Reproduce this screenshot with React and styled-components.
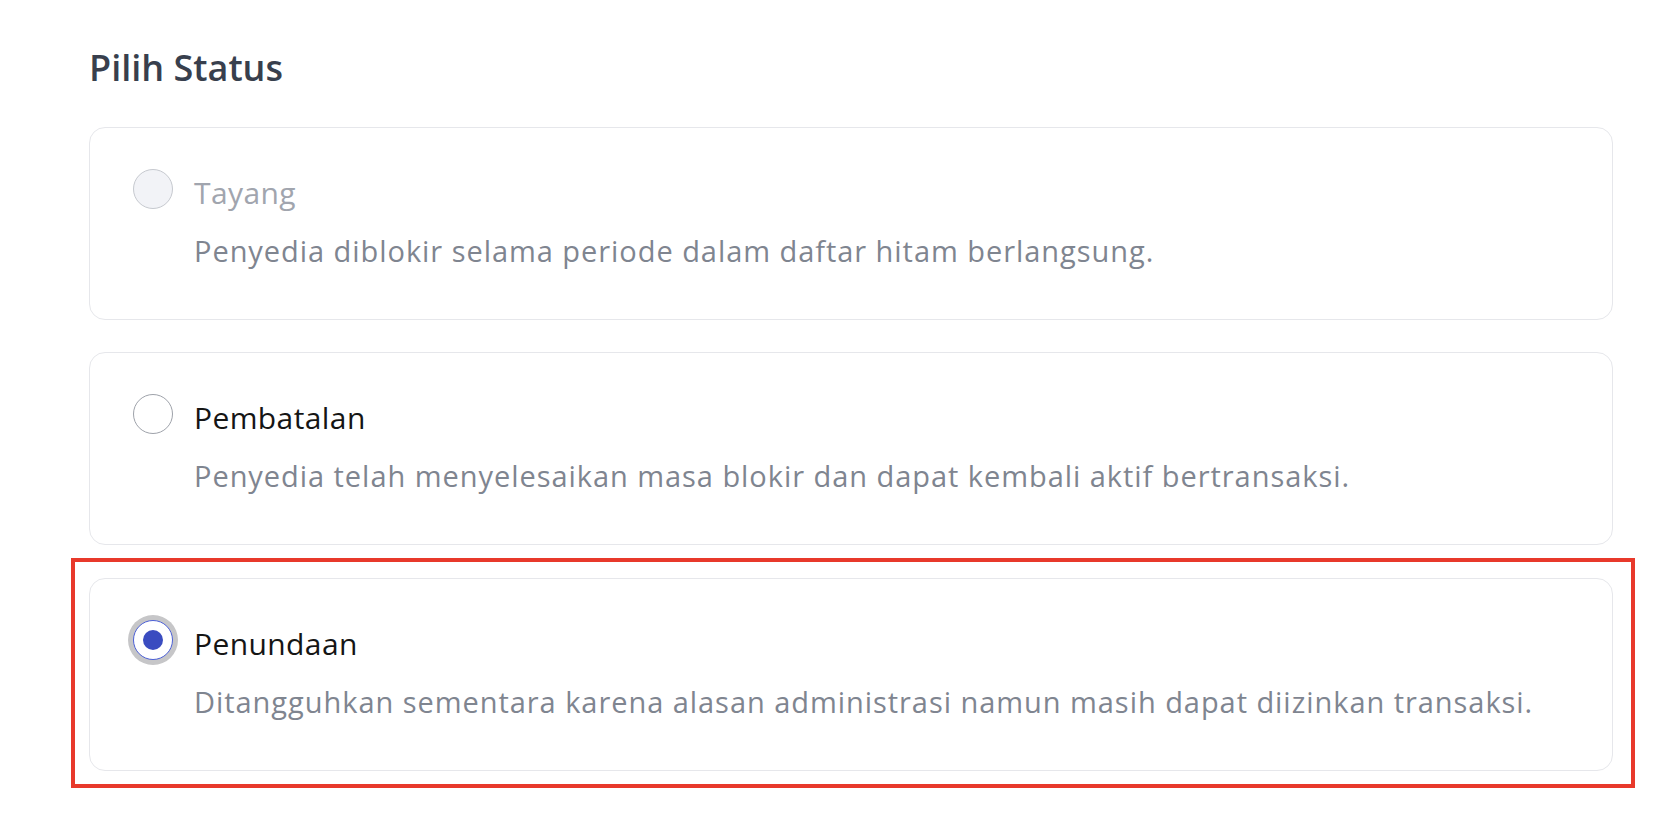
import React, { useState } from "react";
import styled, { createGlobalStyle, css } from "styled-components";

const GlobalStyle = createGlobalStyle`
  body {
    margin: 0;
    background: #ffffff;
    font-family: "Open Sans", "Noto Sans", sans-serif;
  }
`;

const Page = styled.div`
  padding: 44px 57px 40px 89px;
`;

const Title = styled.h2`
  margin: 0 0 35px;
  font-size: 36px;
  line-height: 48px;
  font-weight: 600;
  color: #383f4d;
`;

const OptionList = styled.div`
  display: flex;
  flex-direction: column;
  gap: 32px;
`;

const Card = styled.label`
  position: relative;
  display: grid;
  grid-template-columns: 40px 1fr;
  column-gap: 21px;
  padding: 41px 42px 48px 43px;
  border: 1px solid #e6e7eb;
  border-radius: 16px;
  background: #ffffff;
  cursor: ${({ disabled }) => (disabled ? "default" : "pointer")};

  ${({ highlighted }) =>
    highlighted &&
    css`
      margin-top: 1px;
      &::after {
        content: "";
        position: absolute;
        top: -21px;
        left: -19px;
        right: -23px;
        bottom: -18px;
        border: 4px solid #e8392b;
        pointer-events: none;
      }
    `}
`;

const Radio = styled.span`
  box-sizing: border-box;
  width: 40px;
  height: 40px;
  border-radius: 50%;
  display: flex;
  align-items: center;
  justify-content: center;
  border: 1.5px solid ${({ disabled }) => (disabled ? "#c6c9cf" : "#9ea2aa")};
  background: ${({ disabled }) => (disabled ? "#f2f3f7" : "#ffffff")};

  ${({ checked }) =>
    checked &&
    css`
      border: 1px solid #4b5fd6;
      box-shadow: 0 0 0 5px #c6c6c8;
    `}
`;

const Dot = styled.span`
  width: 20px;
  height: 20px;
  border-radius: 50%;
  background: #3a4cc0;
`;

const Label = styled.span`
  font-size: 30px;
  line-height: 48px;
  letter-spacing: 0.4px;
  color: ${({ disabled }) => (disabled ? "#a1a5ae" : "#151515")};
`;

const Description = styled.span`
  grid-column: 2;
  margin-top: 14px;
  font-size: 29px;
  line-height: 40px;
  letter-spacing: 0.95px;
  color: #7f8590;
`;

const options = [
  {
    id: "tayang",
    label: "Tayang",
    description: "Penyedia diblokir selama periode dalam daftar hitam berlangsung.",
    disabled: true,
  },
  {
    id: "pembatalan",
    label: "Pembatalan",
    description:
      "Penyedia telah menyelesaikan masa blokir dan dapat kembali aktif bertransaksi.",
  },
  {
    id: "penundaan",
    label: "Penundaan",
    description:
      "Ditangguhkan sementara karena alasan administrasi namun masih dapat diizinkan transaksi.",
    highlighted: true,
  },
];

const App = () => {
  const [selected, setSelected] = useState("penundaan");

  return (
    <>
      <GlobalStyle />
      <Page>
        <Title>Pilih Status</Title>
        <OptionList>
          {options.map((opt) => (
            <Card
              key={opt.id}
              disabled={opt.disabled}
              highlighted={opt.highlighted}
              onClick={() => !opt.disabled && setSelected(opt.id)}
            >
              <Radio disabled={opt.disabled} checked={selected === opt.id}>
                {selected === opt.id && <Dot />}
              </Radio>
              <Label disabled={opt.disabled}>{opt.label}</Label>
              <Description>{opt.description}</Description>
            </Card>
          ))}
        </OptionList>
      </Page>
    </>
  );
};

export default App;
